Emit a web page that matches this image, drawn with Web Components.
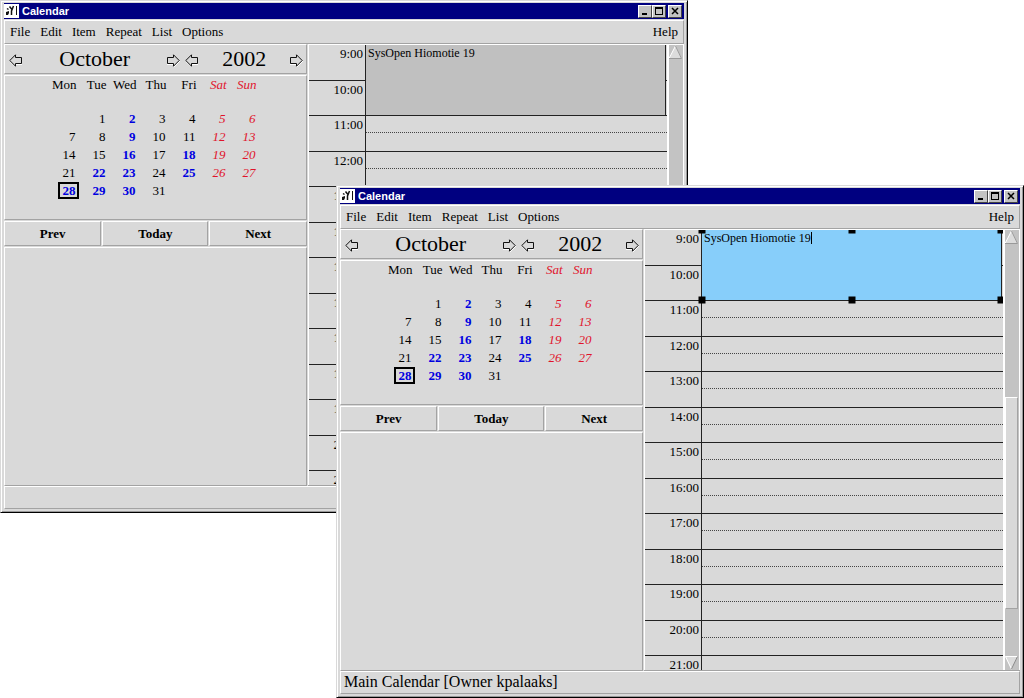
<!DOCTYPE html>
<html lang="en">
<head>
<meta charset="utf-8">
<title>Calendar</title>
<style>
  html, body { height: 100%; }
  body { margin: 0; background: #fff; color: #000; font-family: "Liberation Serif", serif; font-size: 13px; line-height: 18px; }
</style>
</head>
<body>
<desk-top>
  <app-window class="back" caption="Calendar">
    <menu-bar slot="menu"></menu-bar>
    <side-pane slot="side"></side-pane>
    <day-schedule slot="main" event="SysOpen Hiomotie 19"></day-schedule>
    <scroll-bar slot="main"></scroll-bar>
  </app-window>
  <app-window class="front" caption="Calendar">
    <menu-bar slot="menu"></menu-bar>
    <side-pane slot="side"></side-pane>
    <day-schedule slot="main" event="SysOpen Hiomotie 19" editing></day-schedule>
    <scroll-bar slot="main"></scroll-bar>
    <span slot="status">Main Calendar [Owner kpalaaks]</span>
  </app-window>
</desk-top>
<script>
const base = `
  *, *::before, *::after { box-sizing: border-box; }
  button { font: inherit; color: inherit; background: none; border: 0; margin: 0; padding: 0; }
  .raised { background: #d9d9d9; border: 1px solid; border-color: #fff #a3a3a3 #a3a3a3 #fff; }
`;
function define(name, render) {
  customElements.define(name, class extends HTMLElement {
    connectedCallback() {
      if (this.shadowRoot) return;
      this.attachShadow({ mode: "open" }).innerHTML = render(this);
    }
  });
}

/* The desktop on which the two windows overlap. */
define("desk-top", () => `<style>${base}
  :host { display: block; position: relative; min-height: 100%; overflow: hidden; }
  ::slotted(app-window) { position: absolute; }
  ::slotted(.back) { inset: 0 336px 185px 0; }
  ::slotted(.front) { inset: 185px 0 0 336px; }
</style><slot></slot>`);

define("app-window", el => `<style>${base}
  :host { display: flex; flex-direction: column; box-sizing: border-box; background: #d9d9d9;
    border: 1px solid; border-color: #d9d9d9 #000 #000 #d9d9d9; padding: 2px 3px 3px;
    box-shadow: inset 1px 1px #fff, inset -1px -1px #999; }
  header { display: flex; align-items: center; height: 16px; margin-bottom: 1px; padding-right: 2px; background: #000080; color: #fff; }
  header svg { flex: none; }
  h1 { flex: 1; margin: 0 0 0 3px; font: bold 11px/16px "Liberation Sans", sans-serif; }
  header button { width: 14px; height: 13px; background: #c3c3c3; border: 1px solid; border-color: #fff #444 #444 #fff; display: grid; place-items: center; }
  .close { margin-left: 2px; }
  .body { flex: 1; min-height: 0; display: grid; grid-template-columns: 303px 1fr; column-gap: 1px; }
  .main { display: flex; min-width: 0; min-height: 0; border: 1px solid; border-color: #fff #a3a3a3 #a3a3a3 #fff; border-left: 0; border-right: 0; }
  footer { height: 23px; padding: 0 3px; font-size: 16px; line-height: 20px; }
</style>
<header>
  <svg width="15" height="16" viewBox="0 0 15 16" aria-hidden="true"><path fill="#fff" d="M0 1h15v14H0z"/><path fill="#111" d="M2 9l3-1v2l-1 2H2zM12 3h1v9h-1z"/><path d="M5.500 3.500L8 6.500M9.500 3l-2 5v4M3 5.500l1.500 1" stroke="#111" stroke-width="1.500" fill="none"/></svg>
  <h1>${el.getAttribute("caption")}</h1>
  <button aria-label="Minimize"><svg width="10" height="10"><path d="M2 8h5" stroke="#000" stroke-width="2"/></svg></button>
  <button aria-label="Maximize"><svg width="10" height="10" fill="none" stroke="#000" shape-rendering="crispEdges"><path d="M1.500 1.500h7v7h-7zM1 2.500h8"/></svg></button>
  <button class="close" aria-label="Close"><svg width="10" height="10"><path d="M2 2l6 6M8 2L2 8" stroke="#000" stroke-width="1.500"/></svg></button>
</header>
<slot name="menu"></slot>
<div class="body"><slot name="side"></slot><div class="main"><slot name="main"></slot></div></div>
<footer class="raised"><slot name="status"></slot></footer>`);

define("menu-bar", () => `<style>${base}
  :host { display: block; }
  nav { display: flex; align-items: center; gap: 10px; height: 24px; padding: 0 5px; }
  .help { margin-left: auto; }
</style>
<nav class="raised">${["File", "Edit", "Item", "Repeat", "List", "Options"].map(t => `<button>${t}</button>`).join("")}<button class="help">Help</button></nav>`);

/* A caption between a back arrow and a forward arrow. */
define("arrow-stepper", el => `<style>${base}
  :host { display: flex; align-items: center; justify-content: space-between; padding: 0 3px 0 2px; font-size: 22px; line-height: 26px; }
  button { width: 13px; height: 13px; margin-top: 3px; }
  svg { display: block; }
</style>
<button aria-label="Previous ${el.getAttribute("unit")}"><svg width="13" height="13" viewBox="0 0 13 13" fill="none"><path d="M1 7.500l6 5.500M7 10.500h6" stroke="#fff"/><path d="M.8 6.500L6.500 .8v2.700h6v6h-6v2.700z" stroke="#111"/></svg></button>
<slot></slot>
<button aria-label="Next ${el.getAttribute("unit")}"><svg width="13" height="13" viewBox="0 0 13 13" fill="none"><path d="M7 13l6-6M0 10.500h6" stroke="#fff"/><path d="M12.200 6.500L6.500 .8v2.700h-6v6h6v2.700z" stroke="#111"/></svg></button>`);

define("month-table", () => {
  const names = ["Mon", "Tue", "Wed", "Thu", "Fri", "Sat", "Sun"];
  const busy = [2, 9, 16, 18, 22, 23, 25, 28, 29, 30];
  let rows = "";
  for (let w = 0; w < 5; w++) {
    rows += "<tr>";
    for (let d = 0; d < 7; d++) {
      const n = w * 7 + d;
      rows += n < 1 || n > 31 ? "<td></td>" :
        `<td class="${d > 4 ? "rest" : ""}"><button class="${busy.includes(n) ? "busy" : ""} ${n === 28 ? "current" : ""}">${n}</button></td>`;
    }
    rows += "</tr>";
  }
  return `<style>${base}
  :host { display: block; }
  table { table-layout: fixed; width: 210px; margin: 0 auto; border-collapse: collapse; }
  th, td { height: 18px; padding: 0 2px 0 0; text-align: right; font-weight: normal; }
  th { padding-right: 4px; }
  thead th { height: 33px; vertical-align: top; line-height: 17px; }
  td button { display: block; width: 21px; height: 17px; margin-left: auto; padding-right: 1px; border: 2px solid transparent; line-height: 13px; text-align: right; }
  .rest { color: #e0142c; font-style: italic; }
  .busy { color: #0000e0; font-weight: bold; }
  .current { border-color: #000; }
</style>
<table><thead><tr>${names.map((t, i) => `<th scope="col" class="${i > 4 ? "rest" : ""}">${t}</th>`).join("")}</tr></thead><tbody>${rows}</tbody></table>`;
});

define("side-pane", () => `<style>${base}
  :host { display: flex; flex-direction: column; gap: 1px; min-height: 0; }
  .steps { display: grid; grid-template-columns: 59fr 41fr; height: 30px; padding-left: 2px; }
  .month { height: 145px; }
  .buttons { display: flex; gap: 1px; }
  .buttons button { flex: auto; height: 25px; font-weight: bold; }
  .rest { flex: 1; }
</style>
<div class="steps raised"><arrow-stepper unit="month">October</arrow-stepper><arrow-stepper unit="year">2002</arrow-stepper></div>
<div class="month raised"><month-table></month-table></div>
<div class="buttons"><button class="raised">Prev</button><button class="raised">Today</button><button class="raised">Next</button></div>
<div class="rest raised"></div>`);

define("day-schedule", el => {
  const editing = el.hasAttribute("editing");
  const text = el.getAttribute("event");
  let rows = "";
  for (let h = 9; h <= 21; h++) {
    const kind = h === 21 ? "last" : h < 11 ? "taken" : "";
    rows += `<time class="${kind}" style="grid-row:${h - 8}">${h}:00</time><div class="slot ${kind}" style="grid-row:${h - 8}"></div>`;
  }
  return `<style>${base}
  :host { flex: 1; min-width: 0; display: grid; grid-template-columns: 57px 1fr; grid-template-rows: repeat(12, minmax(0, 1fr)) 14px;
    overflow: hidden; border: 1px solid #fff; border-width: 0 0 0 1px; box-sizing: border-box; font-size: 12px; line-height: 16px; }
  time { grid-column: 1; padding-right: 2px; border-bottom: 1px solid #222; border-right: 1px solid #222; font-size: 13px; line-height: 17px; text-align: right; overflow: hidden; }
  .slot { grid-column: 2; border-bottom: 1px solid #222; }
  .slot::before { content: ""; display: block; height: 50%; border-bottom: 1px dotted #444; }
  .last { border-bottom: 0; }
  .last::before, .taken::before { display: none; }
  .event { grid-area: 1 / 2 / 3 / 3; position: relative; display: flex; align-items: flex-start; margin-right: 1px; padding-left: 2px;
    background: #c0c0c0; border: solid #222; border-width: 0 1px 1px 0; }
  .editing { background: #87cefa; }
  input { field-sizing: content; font: inherit; color: inherit; height: 16px; padding: 0; border: 0; background: none; outline: 0; }
  .caret { width: 1px; height: 12px; margin-top: 2px; background: #000; }
  i { position: absolute; width: 7px; height: 7px; background: #000; transform: translate(-50%, -50%); }
</style>${rows}
<div class="event ${editing ? "editing" : ""}">${editing
  ? `<input aria-label="Event" value="${text}"><span class="caret"></span>${[0, 50, 100].map(x => `<i style="left:${x}%;top:0"></i><i style="left:${x}%;top:100%"></i>`).join("")}`
  : text}</div>`;
});

define("scroll-bar", () => `<style>${base}
  :host { width: 17px; display: flex; flex-direction: column; padding: 0 1px; box-sizing: border-box; background: #c3c3c3;
    border: solid; border-width: 0 1px; border-color: #a3a3a3 #fff; box-shadow: inset 1px 0 #fff; }
  button, svg { display: block; height: 14px; width: 13px; }
  .before { flex: 154; } .after { flex: 47; }
  .thumb { flex: 211; }
</style>
<button aria-label="Scroll up"><svg viewBox="0 0 13 14"><path d="M6.500 0L13 14H0z" fill="#dcdcdc"/><path d="M0 13.500L6.500 1" stroke="#fff"/><path d="M6.500 1L12.500 13.500H0" stroke="#999" fill="none"/></svg></button>
<div class="before"></div><div class="thumb raised"></div><div class="after"></div>
<button aria-label="Scroll down"><svg viewBox="0 0 13 14"><path d="M0 0h13L6.500 14z" fill="#dcdcdc"/><path d="M12.500 .5H.5L6.500 13" stroke="#fff" fill="none"/><path d="M12.500 .5L6.500 13" stroke="#888"/></svg></button>`);
</script>
</body>
</html>
